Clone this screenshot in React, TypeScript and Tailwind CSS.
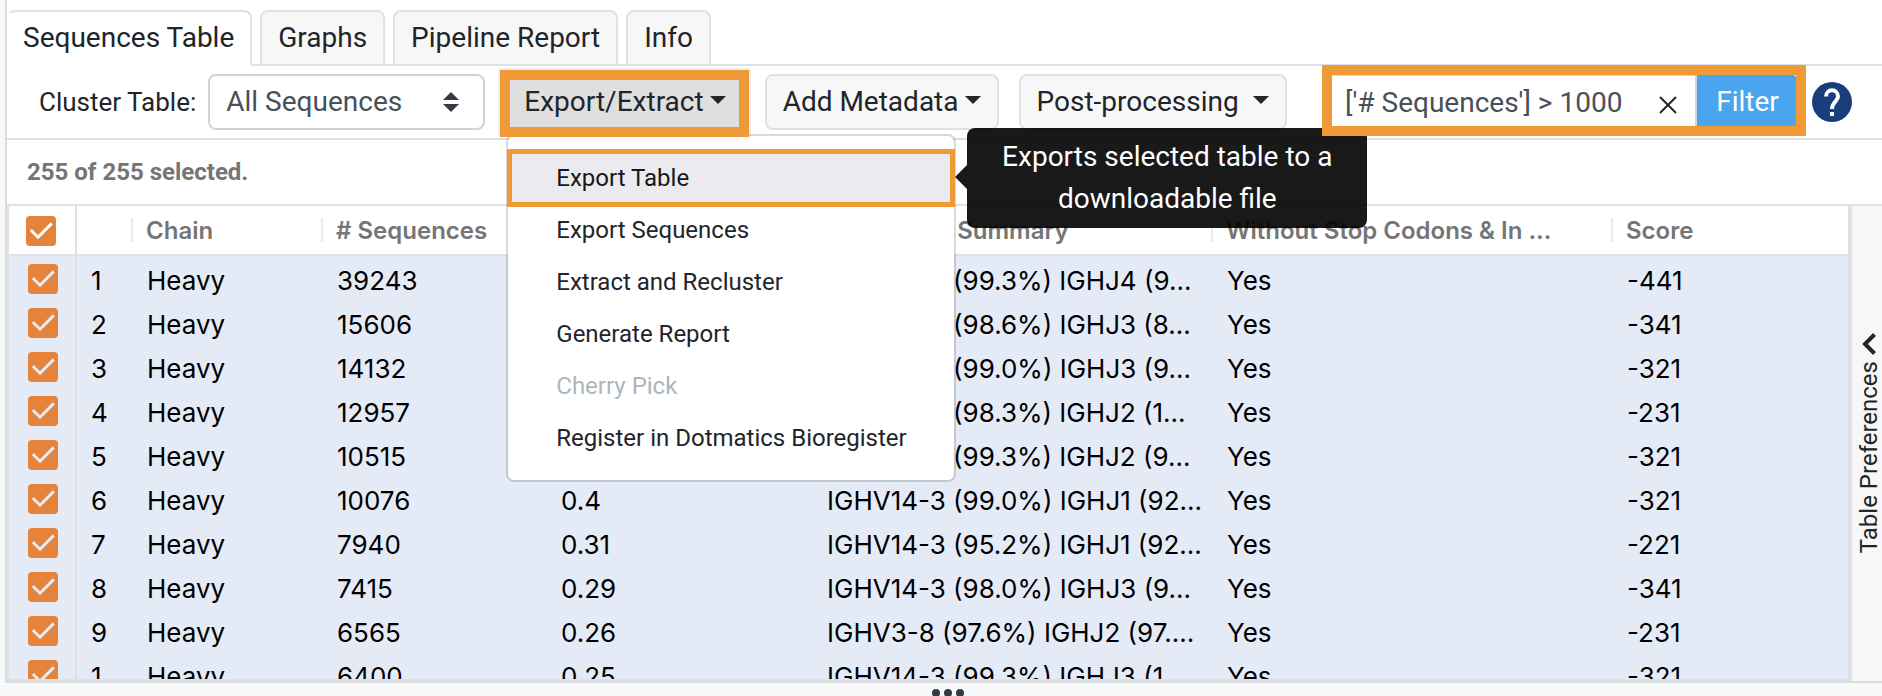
import { useState } from "react";

type SequenceRow = {
  id: string;
  chain: string;
  count: number;
  percent: string;
  genes: string;
  inFrame: string;
  score: number;
};

const tabs = ["Sequences Table", "Graphs", "Pipeline Report", "Info"];

const exportItems = [
  { label: "Export Table", hint: "Exports selected table to a downloadable file" },
  { label: "Export Sequences" },
  { label: "Extract and Recluster" },
  { label: "Generate Report" },
  { label: "Cherry Pick", disabled: true },
  { label: "Register in Dotmatics Bioregister" },
];

const columns = [
  "Chain",
  "# Sequences",
  "% Sequences",
  "Gene Pairs Summary",
  "Without Stop Codons & In ...",
  "Score",
];

const rows: SequenceRow[] = [
  { id: "1", chain: "Heavy", count: 39243, percent: "1.55", genes: "IGHV14-3 (99.3%) IGHJ4 (9...", inFrame: "Yes", score: -441 },
  { id: "2", chain: "Heavy", count: 15606, percent: "0.62", genes: "IGHV14-3 (98.6%) IGHJ3 (8...", inFrame: "Yes", score: -341 },
  { id: "3", chain: "Heavy", count: 14132, percent: "0.56", genes: "IGHV14-3 (99.0%) IGHJ3 (9...", inFrame: "Yes", score: -321 },
  { id: "4", chain: "Heavy", count: 12957, percent: "0.51", genes: "IGHV14-3 (98.3%) IGHJ2 (1...", inFrame: "Yes", score: -231 },
  { id: "5", chain: "Heavy", count: 10515, percent: "0.42", genes: "IGHV14-3 (99.3%) IGHJ2 (9...", inFrame: "Yes", score: -321 },
  { id: "6", chain: "Heavy", count: 10076, percent: "0.4", genes: "IGHV14-3 (99.0%) IGHJ1 (92...", inFrame: "Yes", score: -321 },
  { id: "7", chain: "Heavy", count: 7940, percent: "0.31", genes: "IGHV14-3 (95.2%) IGHJ1 (92...", inFrame: "Yes", score: -221 },
  { id: "8", chain: "Heavy", count: 7415, percent: "0.29", genes: "IGHV14-3 (98.0%) IGHJ3 (9...", inFrame: "Yes", score: -341 },
  { id: "9", chain: "Heavy", count: 6565, percent: "0.26", genes: "IGHV3-8 (97.6%) IGHJ2 (97....", inFrame: "Yes", score: -231 },
  { id: "1", chain: "Heavy", count: 6400, percent: "0.25", genes: "IGHV14-3 (99.3%) IGHJ3 (1...", inFrame: "Yes", score: -321 },
];

function Caret() {
  return (
    <svg width="16" height="8" viewBox="0 0 16 8" className="mb-1 fill-[#212529]" aria-hidden="true">
      <path d="M0 0h16L8 8z" />
    </svg>
  );
}

function Checkbox({ label, checked, onChange }: { label: string; checked: boolean; onChange: () => void }) {
  return (
    <span className="relative block size-[30px]">
      <input
        type="checkbox"
        aria-label={label}
        checked={checked}
        onChange={onChange}
        className="peer block size-[30px] appearance-none rounded-sm border-2 border-gray-400 checked:border-0 checked:bg-[#e5833b]"
      />
      <svg
        viewBox="0 0 30 30"
        className="pointer-events-none absolute inset-0 hidden fill-none stroke-current stroke-3 peer-checked:block"
        aria-hidden="true"
      >
        <path d="M4.8 14 12 21.2 25.8 7.4" />
      </svg>
    </span>
  );
}

export default function App() {
  const [activeTab, setActiveTab] = useState(tabs[0]);
  const [menuOpen, setMenuOpen] = useState(true);
  const [filter, setFilter] = useState("['# Sequences'] > 1000");
  const [selected, setSelected] = useState<boolean[]>(rows.map(() => true));

  const allSelected = selected.every(Boolean);
  const toggleRow = (index: number) => setSelected(selected.map((value, i) => (i === index ? !value : value)));

  return (
    <div className="flex h-screen flex-col overflow-hidden bg-[#f8f9fb] pl-[5px] font-[Roboto,sans-serif] text-[#212529]">
      <div className="flex min-h-0 grow flex-col border-b-2 border-l-2 border-[#dcdcdc] bg-white">
        <nav className="flex shrink-0 gap-2 border-b-2 border-[#dee2e6] pt-2.5">
          {tabs.map((tab) => (
            <button
              key={tab}
              type="button"
              onClick={() => setActiveTab(tab)}
              className={`-mb-0.5 h-14 rounded-t-lg border-2 border-[#dee2e6] px-4 text-[28px] first:pl-3.5 ${
                tab === activeTab ? "border-b-white border-l-white bg-white" : "bg-[#f7f7f7]"
              }`}
            >
              {tab}
            </button>
          ))}
        </nav>

        <div className="flex h-[74px] shrink-0 items-center border-b-2 border-[#dedede] pl-8 text-[28px]">
          <label htmlFor="cluster-table" className="mr-3 text-[26px]">
            Cluster Table:
          </label>
          <div className="relative mr-[19px]">
            <select
              id="cluster-table"
              className="h-14 w-[277px] appearance-none rounded-lg border-2 border-[#ced4da] bg-white pl-4 text-[#495057]"
            >
              <option>All Sequences</option>
            </select>
            <svg
              width="16"
              height="20"
              viewBox="0 0 16 20"
              className="pointer-events-none absolute top-[18px] right-[26px] fill-[#343a40]"
              aria-hidden="true"
            >
              <path d="M0 8h16L8 0zM0 12h16l-8 8z" />
            </svg>
          </div>

          <div className="relative mr-5">
            <button
              type="button"
              onClick={() => setMenuOpen(!menuOpen)}
              className="flex h-14 items-center gap-1.5 bg-[#dfdfdf] px-5 pr-[19px] ring-6 ring-[#ebedf0]"
            >
              Export/Extract
              <Caret />
            </button>
            {menuOpen && (
              <ul className="absolute top-[60px] left-0.5 z-10 w-[450px] rounded-lg border-2 border-black/15 bg-white bg-clip-padding py-4 text-2xl">
                {exportItems.map((item) => (
                  <li key={item.label} className="relative">
                    <button
                      type="button"
                      disabled={item.disabled}
                      className={`block h-[52px] w-full pl-12 text-left whitespace-nowrap disabled:text-[#adb5bd] ${
                        item.hint ? "bg-[#ebebef] text-[#16181b]" : ""
                      }`}
                    >
                      {item.label}
                    </button>
                    {item.hint && (
                      <>
                        <span className="pointer-events-none absolute -inset-x-px -inset-y-[3px] border-5 border-[#f09a37]" />
                        <div
                          role="tooltip"
                          className="absolute -top-6 left-full ml-[13px] w-[400px] rounded-lg bg-black/90 px-4 py-2 text-center text-[28px] leading-[42px] text-white"
                        >
                          {item.hint}
                          <svg
                            width="12"
                            height="24"
                            viewBox="0 0 12 24"
                            className="absolute top-[37px] right-full fill-black/90"
                            aria-hidden="true"
                          >
                            <path d="M12 0v24L0 12z" />
                          </svg>
                        </div>
                      </>
                    )}
                  </li>
                ))}
              </ul>
            )}
            <span className="pointer-events-none absolute -inset-x-1 -top-1 -bottom-[7px] z-20 border-10 border-[#f09a37]" />
          </div>

          <button
            type="button"
            className="mr-5 flex h-14 items-center gap-1.5 rounded-lg border-2 border-[#dee2e6] bg-[#f7f7f7] px-4"
          >
            Add Metadata
            <Caret />
          </button>
          <button
            type="button"
            className="flex h-14 items-center gap-3.5 rounded-lg border-2 border-[#dee2e6] bg-[#f7f7f7] px-4"
          >
            Post-processing
            <Caret />
          </button>

          <form className="relative ml-auto flex" onSubmit={(e) => e.preventDefault()}>
            <input
              type="text"
              aria-label="Filter expression"
              value={filter}
              onChange={(e) => setFilter(e.target.value)}
              className="h-14 w-[370px] border-2 border-[#ced4da] bg-white pr-16 pl-4 text-[#495057]"
            />
            <button
              type="button"
              aria-label="Clear filter"
              onClick={() => setFilter("")}
              className="absolute top-5 right-[119px] p-0.5"
            >
              <svg width="18" height="18" viewBox="0 0 18 18" className="fill-none stroke-[#212529] stroke-2" aria-hidden="true">
                <path d="M1 1l16 16M17 1 1 17" />
              </svg>
            </button>
            <button type="submit" className="h-14 w-[101px] rounded-r-lg bg-[#4ba5ee] text-white">
              Filter
            </button>
            <span className="pointer-events-none absolute -top-[9px] -right-2 -bottom-1.5 -left-[5px] z-20 border-10 border-[#f09a37]" />
          </form>
          <button type="button" aria-label="Help" className="mr-[30px] ml-3.5">
            <svg width="40" height="40" viewBox="0 0 40 40" aria-hidden="true">
              <circle cx="20" cy="20" r="20" fill="#1a3e7c" />
              <path
                d="M14 14.5a6 6.2 0 1 1 12 0c0 4.4-6 5.6-6 12.6"
                fill="none"
                stroke="#fff"
                strokeWidth="4"
              />
              <path d="M18 30h4v4h-4z" fill="#fff" />
            </svg>
          </button>
        </div>

        <p className="flex h-16 shrink-0 items-center pl-5 text-2xl font-bold text-[#757575]">
          {allSelected ? 255 : selected.filter(Boolean).length} of 255 selected.
        </p>

        <div className="flex min-h-0 grow border-t-2 border-[#dee2e6]">
          <div className="min-w-0 grow overflow-hidden border-r-4 border-b-2 border-l-2 border-[#dee2e6]">
            <table className="w-full table-fixed border-separate border-spacing-0 font-[Inter,sans-serif]">
              <colgroup>
                <col className="w-[68px]" />
                <col className="w-[56px]" />
                <col className="w-[190px]" />
                <col className="w-[224px]" />
                <col className="w-[266px]" />
                <col className="w-[400px]" />
                <col className="w-[400px]" />
                <col />
              </colgroup>
              <thead>
                <tr className="h-[50px] text-left text-2xl text-[#757575]">
                  <th className="border-r-2 border-b-2 border-[#dee2e6] pt-0.5 pb-0 pl-[17px] text-white">
                    <Checkbox
                      label="Select all rows"
                      checked={allSelected}
                      onChange={() => setSelected(rows.map(() => !allSelected))}
                    />
                  </th>
                  <th className="border-b-2 border-[#dee2e6] p-0">
                    <span className="ml-auto block h-6 w-0.5 bg-[#e8eaec]" />
                  </th>
                  {columns.map((column, i) => (
                    <th key={column} className="border-b-2 border-[#dee2e6] p-0 font-semibold">
                      <div
                        className={`flex h-6 items-center pt-0.5 pl-[13px] whitespace-nowrap ${
                          i < columns.length - 1 ? "border-r-2 border-[#e8eaec]" : ""
                        }`}
                      >
                        {column}
                      </div>
                    </th>
                  ))}
                </tr>
              </thead>
              <tbody className="bg-[#e4ebf7] text-[26px] leading-8 whitespace-nowrap text-black">
                {rows.map((row, i) => (
                  <tr key={i} className="h-11">
                    <td className="border-r-2 border-[#dee2e6] pt-0.5 pb-0 pl-[19px] text-[#e4ebf7]">
                      <Checkbox label={`Select row ${i + 1}`} checked={selected[i]} onChange={() => toggleRow(i)} />
                    </td>
                    <td className="pt-1.5 pb-0 pl-3.5">{row.id}</td>
                    <td className="pt-1.5 pb-0 pl-3.5">{row.chain}</td>
                    <td className="pt-1.5 pb-0 pl-3.5">{row.count}</td>
                    <td className="pt-1.5 pb-0 pl-3.5">{row.percent}</td>
                    <td className="pt-1.5 pb-0 pl-3.5">{row.genes}</td>
                    <td className="pt-1.5 pb-0 pl-3.5">{row.inFrame}</td>
                    <td className="pt-1.5 pb-0 pl-3.5">{row.score}</td>
                  </tr>
                ))}
              </tbody>
            </table>
          </div>
          <button
            type="button"
            className="flex w-[30px] shrink-0 flex-col items-center justify-center gap-1.5 bg-[#f7f7f7] pl-1 text-2xl leading-7"
          >
            <svg width="14" height="22" viewBox="0 0 14 22" className="fill-none stroke-[#212529] stroke-4" aria-hidden="true">
              <path d="M12.5 1.5 3 11l9.5 9.5" />
            </svg>
            <span className="rotate-180 whitespace-nowrap [writing-mode:vertical-rl]">Table Preferences</span>
          </button>
        </div>
      </div>

      <div className="flex h-[13px] shrink-0 justify-center gap-1 overflow-hidden pt-1.5 pl-2">
        <span className="size-2 rounded-full bg-[#343a40]" />
        <span className="size-2 rounded-full bg-[#343a40]" />
        <span className="size-2 rounded-full bg-[#343a40]" />
      </div>
    </div>
  );
}
